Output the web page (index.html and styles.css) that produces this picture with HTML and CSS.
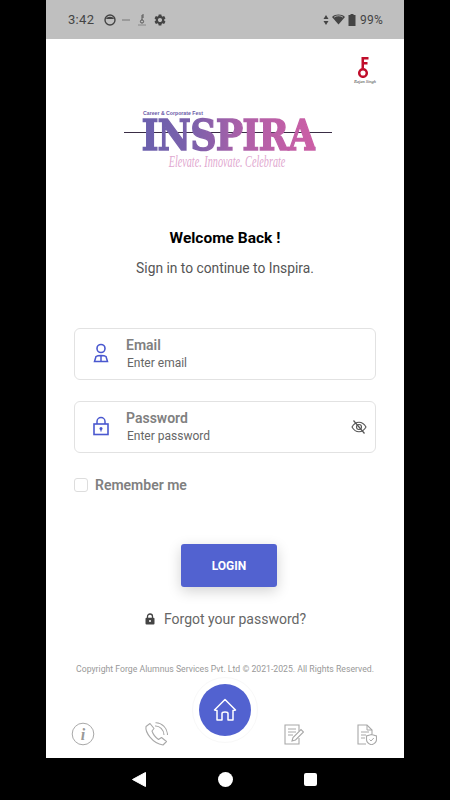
FILE: index.html
```html
<!DOCTYPE html>
<html lang="en">
<head>
<meta charset="utf-8">
<title>Inspira Login</title>
<link rel="stylesheet" href="styles.css">
</head>
<body>
<div class="phone">
  <header class="status">
    <span class="time">3:42</span>
    <svg class="st-ic" width="12" height="12" viewBox="0 0 12 12"><circle cx="6" cy="6" r="5" fill="none" stroke="#444" stroke-width="1.4"/><path d="M2 5C3 2 9 2 10 5Z" fill="#444"/></svg>
    <svg class="st-dash" width="8" height="12" viewBox="0 0 8 12"><path d="M0 6H8" stroke="#777" stroke-width="1"/></svg>
    <svg class="st-key" width="10" height="12" viewBox="0 0 10 12"><circle cx="5" cy="7.500" r="1.600" fill="none" stroke="#555"/><path d="M5 6V1H7M5 3H7" stroke="#555" fill="none"/><path d="M1 11H9" stroke="#888"/></svg>
    <svg class="st-gear" width="14" height="14" viewBox="0 0 24 24"><path fill="#444" d="M19.14 12.94c.04-.3.06-.61.06-.94 0-.32-.02-.64-.07-.94l2.03-1.58c.18-.14.23-.41.12-.61l-1.92-3.32c-.12-.22-.37-.29-.59-.22l-2.39.96c-.5-.38-1.03-.7-1.62-.94l-.36-2.54c-.04-.24-.24-.41-.48-.41h-3.84c-.24 0-.43.17-.47.41l-.36 2.54c-.59.24-1.13.57-1.62.94l-2.39-.96c-.22-.08-.47 0-.59.22L2.74 8.87c-.12.21-.08.47.12.61l2.03 1.58c-.05.3-.09.63-.09.94s.02.64.07.94l-2.03 1.58c-.18.14-.23.41-.12.61l1.92 3.32c.12.22.37.29.59.22l2.39-.96c.5.38 1.03.7 1.62.94l.36 2.54c.05.24.24.41.48.41h3.84c.24 0 .44-.17.47-.41l.36-2.54c.59-.24 1.13-.56 1.62-.94l2.39.96c.22.08.47 0 .59-.22l1.92-3.32c.12-.22.07-.47-.12-.61l-2.01-1.58zM12 15.600c-1.980 0-3.600-1.620-3.600-3.600s1.620-3.600 3.600-3.600 3.600 1.620 3.600 3.600-1.620 3.600-3.600 3.600z"/></svg>
    <span class="status-right">
      <svg width="6" height="12" viewBox="0 0 6 12"><path d="M3 1L5.500 5H.5ZM3 11L.5 7H5.500Z" fill="#444"/></svg>
      <svg width="13" height="11" viewBox="0 0 13 11"><path d="M6.500 10.500L0 3C3.500-.2 9.500-.2 13 3Z" fill="#444"/><path d="M2 3.200C4.500 1.300 8.500 1.300 11 3.200" stroke="#bfbfbf" stroke-width=".8" fill="none"/></svg>
      <svg width="8" height="12" viewBox="0 0 8 12"><path d="M2.500 0H5.500V1H7.500V12H.5V1H2.500Z" fill="#444"/></svg>
      <span class="pct">99%</span>
    </span>
  </header>

  <main class="screen">
    <div class="brand-row">
      <div class="key-logo">
        <svg width="18" height="21" viewBox="0 0 18 21"><path d="M5.500 0H12.500V2.500H8V5H11.500V7.500H8V11.500H5.500Z" fill="#c00d2b"/><circle cx="7" cy="16" r="3.800" fill="none" stroke="#c00d2b" stroke-width="2.500"/></svg>
        <span class="key-sign">Rajan Singh</span>
      </div>
    </div>

    <div class="logo">
      <span class="logo-top">Career &amp; Corporate Fest</span>
      <div class="logo-main">
        <span class="logo-line"></span>
        <span class="logo-word">INSPIRA</span>
      </div>
      <span class="logo-tag">Elevate. Innovate. Celebrate</span>
    </div>

    <h1 class="welcome">Welcome Back !</h1>
    <p class="subtitle">Sign in to continue to Inspira.</p>

    <form class="form">
      <div class="field">
        <svg class="field-ic" width="16" height="20" viewBox="0 0 16 20"><circle cx="8" cy="5.500" r="4" fill="none" stroke="#4a58cf" stroke-width="1.600"/><path d="M1.500 18.500L3 13.500C5 12 11 12 13 13.500L14.500 18.500ZM8 12.500V18.500" fill="none" stroke="#4a58cf" stroke-width="1.500"/></svg>
        <div class="field-text">
          <span class="field-label">Email</span>
          <span class="field-hint">Enter email</span>
        </div>
      </div>
      <div class="field">
        <svg class="field-ic" width="16" height="20" viewBox="0 0 16 20"><path d="M4 8V5.500C4 3.300 5.800 1.500 8 1.500S12 3.300 12 5.500V8" fill="none" stroke="#4a58cf" stroke-width="1.500"/><rect x="1" y="8" width="14" height="10.500" fill="none" stroke="#4a58cf" stroke-width="1.600"/><circle cx="8" cy="12.500" r="1.500" fill="#4a58cf"/><path d="M8 13V15.500" stroke="#4a58cf" stroke-width="1.200"/></svg>
        <div class="field-text">
          <span class="field-label">Password</span>
          <span class="field-hint">Enter password</span>
        </div>
        <svg class="eye" width="16" height="16" viewBox="0 0 16 16"><path d="M1 8C3 4.500 5.500 3.200 8 3.200S13 4.500 15 8C13 11.500 10.500 12.800 8 12.800S3 11.500 1 8Z" fill="none" stroke="#555" stroke-width="1.100"/><circle cx="8" cy="8" r="2.500" fill="none" stroke="#555" stroke-width="1.100"/><path d="M2.500 1.500L13.500 14.500" stroke="#555" stroke-width="1.200"/></svg>
      </div>
      <label class="remember">
        <span class="check"></span>
        <span>Remember me</span>
      </label>
      <button class="login" type="button">LOGIN</button>
      <div class="forgot">
        <svg width="12" height="12" viewBox="0 0 12 12"><path d="M3.500 5V3.500C3.500 2.100 4.600 1 6 1S8.500 2.100 8.500 3.500V5" fill="none" stroke="#444" stroke-width="1.300"/><rect x="1.500" y="4.800" width="9" height="6.700" rx="1" fill="#444"/><circle cx="6" cy="8" r="1" fill="#fff"/></svg>
        <span>Forgot your password?</span>
      </div>
    </form>

    <p class="copy">Copyright Forge Alumnus Services Pvt. Ltd © 2021-2025. All Rights Reserved.</p>

    <nav class="tabs">
      <svg width="24" height="24" viewBox="0 0 24 24"><circle cx="12" cy="12" r="10.800" fill="none" stroke="#a8a8a8" stroke-width="1"/><text class="i-glyph" x="12" y="17.500" text-anchor="middle">i</text></svg>
      <svg class="tab-call" width="24" height="24" viewBox="0 0 24 24"><path d="M6 1.500L2 4.500C1 10 8 21 19 23L22.500 19.500L17.500 15.500L14.500 17.500C11.500 15.500 9 12 8 9L10 6.500Z" fill="none" stroke="#a8a8a8" stroke-width="1.100" stroke-linejoin="round"/><path d="M11 4C15.500 3.500 20 8 20 13M11.500 0.800C17.500 .5 23.500 6 23.500 13" fill="none" stroke="#a8a8a8" stroke-width="1.100"/></svg>
      <span class="tab-gap"></span>
      <svg class="tab-edit" width="20" height="21" viewBox="0 0 20 21"><path d="M15 7V1H1V20H15V14" fill="none" stroke="#a8a8a8" stroke-width="1.100"/><path d="M4 5H12M4 8H12M4 11H9" stroke="#a8a8a8" stroke-width="1"/><path d="M8 17L9 13.500L17 5.500L19.500 8L11.500 16Z" fill="#fff" stroke="#a8a8a8" stroke-width="1.100"/></svg>
      <svg class="tab-doc" width="20" height="21" viewBox="0 0 20 21"><path d="M9 20H1V1H10L15 6V10" fill="none" stroke="#a8a8a8" stroke-width="1.100"/><path d="M10 1V6H15M4 8H12M4 11H9M4 14H8" fill="none" stroke="#a8a8a8" stroke-width="1"/><path d="M14.500 10.500L19.500 12V15.500C19.500 18 17 20 14.500 20.800C12 20 9.500 18 9.500 15.500V12Z" fill="#fff" stroke="#a8a8a8" stroke-width="1.100"/><path d="M12.500 15.500L14 17L16.800 14" fill="none" stroke="#a8a8a8"/></svg>
    </nav>

    <div class="home-halo"></div>
    <div class="home">
      <svg width="24" height="24" viewBox="0 0 24 24"><path d="M1.500 12L12 1.500L22.500 12L20 12.500V22H15V15.500C15 13.500 9 13.500 9 15.500V22H4V12.500Z" fill="none" stroke="#fff" stroke-width="1.500" stroke-linejoin="round"/></svg>
    </div>
  </main>

  <footer class="sysnav">
    <svg width="14" height="15" viewBox="0 0 14 15"><path d="M13.500 .5V14.500L.5 7.500Z" fill="#fff" stroke="#fff" stroke-linejoin="round"/></svg>
    <span class="sys-circle"></span>
    <span class="sys-square"></span>
  </footer>
</div>
</body>
</html>
```

FILE: styles.css
```css
* { box-sizing: border-box; }
html, body { margin: 0; height: 100%; background: #000; }
body { font-family: Roboto, "Liberation Sans", sans-serif; overflow: hidden; }

.phone {
  width: 358px;
  height: 800px;
  margin-left: 46px;
  display: flex;
  flex-direction: column;
}

.status {
  height: 39px;
  flex: none;
  background: #bfbfbf;
  display: flex;
  align-items: center;
  padding: 0 21px 0 22px;
  color: #444;
}
.time { font-size: 13px; letter-spacing: .3px; margin-right: 10px; }
.st-ic { margin-right: 6px; }
.st-dash { margin-right: 7px; }
.st-key { margin-right: 6px; }
.status-right { margin-left: auto; display: flex; align-items: center; gap: 3px; }
.pct { font-size: 12px; margin-left: 1px; letter-spacing: .2px; }

.screen {
  position: relative;
  flex: 1;
  background: #fff;
  display: flex;
  flex-direction: column;
  align-items: center;
  overflow: hidden;
}

.brand-row { align-self: flex-end; padding: 18px 26px 0 0; height: 71px; }
.key-logo { display: flex; flex-direction: column; align-items: center; width: 26px; }
.key-sign { font-family: "Liberation Serif", serif; font-style: italic; font-size: 4.500px; line-height: 6px; color: #333; white-space: nowrap; margin-top: 1px; }

.logo { display: flex; flex-direction: column; width: 210px; height: 66px; }
.logo-top { font-family: "Liberation Sans", sans-serif; font-weight: 700; font-size: 5.200px; line-height: 7px; color: #6a5aa8; margin-left: 23px; }
.logo-main { position: relative; height: 36px; display: flex; justify-content: center; }
.logo-line { position: absolute; left: 4px; right: -2px; top: 15px; height: 1px; background: #3a2d45; }
.logo-word {
  position: relative;
  left: 4px;
  font-family: "DejaVu Serif", serif;
  font-weight: 700;
  font-size: 43px;
  line-height: 36px;
  letter-spacing: -1px;
  white-space: nowrap;
  transform: scaleX(.85);
  -webkit-text-stroke: 1.400px transparent;
  background: linear-gradient(90deg, #6a60ad 0%, #7c60ab 30%, #b060a8 60%, #cc5ea5 100%);
  -webkit-background-clip: text;
  background-clip: text;
  color: transparent;
}
.logo-tag {
  font-family: "Liberation Serif", serif;
  font-style: italic;
  font-size: 17px;
  line-height: 18px;
  color: #dfa8d0;
  text-align: center;
  transform: translateX(2px) scaleX(.6);
  white-space: nowrap;
}

.welcome { margin: 52px 0 0; font-size: 15.500px; line-height: 20px; font-weight: 700; color: #000; }
.subtitle { margin: 10px 0 0; font-size: 13.800px; line-height: 20px; color: #555; }

.form { margin-top: 50px; width: 302px; display: flex; flex-direction: column; }
.field {
  height: 52px;
  border: 1px solid #e2e2e2;
  border-radius: 6px;
  display: flex;
  align-items: center;
  padding: 0 8px 0 18px;
  margin-bottom: 21px;
}
.field-ic { flex: none; margin-top: -2px; }
.field-text { display: flex; flex-direction: column; margin-left: 17px; }
.field-label { font-size: 14px; line-height: 17px; font-weight: 600; color: #808080; }
.field-hint { font-size: 12px; line-height: 17px; color: #666; margin: 1px 0 0 1px; }
.eye { margin-left: auto; }

.remember { display: flex; align-items: center; gap: 7px; font-size: 14px; font-weight: 600; color: #808080; height: 22px; }
.check { width: 14px; height: 14px; border: 1px solid #ddd; border-radius: 3px; }

.login {
  align-self: center;
  margin: 48px 0 0 8px;
  width: 96px;
  height: 43px;
  border: 0;
  border-radius: 3px;
  background: #5262d0;
  color: #fff;
  font: 700 12px Roboto, sans-serif;
  box-shadow: 0 4px 14px rgba(0,0,0,.18);
}
.forgot { align-self: center; display: flex; align-items: center; gap: 8px; margin-top: 22px; font-size: 14px; line-height: 20px; color: #666; }

.copy { margin: 34px 0 0; font-size: 8.700px; line-height: 12px; color: #999; white-space: nowrap; }

.tabs { position: absolute; left: 25px; right: 27px; bottom: 12px; display: flex; align-items: center; justify-content: space-between; }
.tab-call { margin-left: 49px; }
.tab-gap { flex: 1; }
.tab-edit { margin-right: 53px; }
.i-glyph { font-family: "Liberation Serif", serif; font-style: italic; font-weight: 700; font-size: 16px; fill: #999; }

.home-halo { position: absolute; left: 146px; top: 638px; width: 66px; height: 66px; border-radius: 50%; border: 1px solid #f8f8f8; }
.home {
  position: absolute;
  left: 153px;
  top: 645px;
  width: 52px;
  height: 52px;
  border-radius: 50%;
  background: #5262d0;
  display: flex;
  align-items: center;
  justify-content: center;
}

.sysnav { height: 42px; flex: none; background: #000; display: flex; align-items: center; padding: 0 87px 0 86px; justify-content: space-between; }
.sys-circle { width: 15px; height: 15px; border-radius: 50%; background: #fff; }
.sys-square { width: 13px; height: 13px; border-radius: 2px; background: #fff; }
```
